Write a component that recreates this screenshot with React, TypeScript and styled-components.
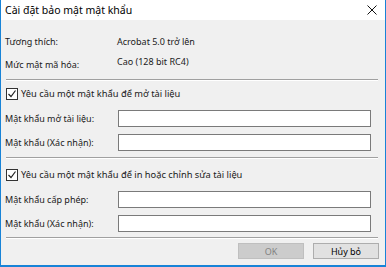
import React from "react";
import styled, { createGlobalStyle } from "styled-components";

const Global = createGlobalStyle`
  html, body { margin: 0; padding: 0; background: #f0f0f0; }
  body { font-family: "Noto Sans", "Open Sans", sans-serif; }
  * { box-sizing: border-box; }
`;

const Window = styled.div`
  width: 386px;
  height: 267px;
  display: flex;
  flex-direction: column;
  background: #f0f0f0;
  border: 1px solid #1883d7;
  border-top: none;
  border-bottom-width: 2px;
`;

const TitleBar = styled.div`
  height: 20px;
  background: #ffffff;
  display: flex;
  align-items: center;
  justify-content: space-between;
  padding: 0 8px 0 4px;
  font-size: 10.5px;
  color: #000;
`;

const Body = styled.div`
  flex: 1;
  display: flex;
  flex-direction: column;
  padding: 0 6px 0 4px;
  font-size: 9px;
  color: #1a1a1a;
`;

const InfoRow = styled.div<{ $top: number }>`
  display: grid;
  grid-template-columns: 112px 1fr;
  margin-top: ${(p) => p.$top}px;
  height: 14px;
  align-items: center;
`;

const InfoValue = styled.span<{ $shift?: number }>`
  position: relative;
  top: ${(p) => p.$shift ?? 0}px;
`;

const Separator = styled.div<{ $top: number }>`
  margin-top: ${(p) => p.$top}px;
  height: 2px;
  border-top: 1px solid #a0a0a0;
  border-bottom: 1px solid #ffffff;
  margin-left: 1px;
  margin-right: 1px;
`;

const CheckRow = styled.label<{ $top: number }>`
  display: flex;
  align-items: center;
  gap: 3px;
  margin-top: ${(p) => p.$top}px;
  height: 13px;
  font-size: 9.3px;
`;

const Box = styled.span`
  width: 12px;
  height: 12px;
  border: 1px solid #333;
  background: #fff;
  display: inline-flex;
  align-items: center;
  justify-content: center;
  margin-left: 1px;
`;

const FieldRow = styled.div<{ $top: number }>`
  display: grid;
  grid-template-columns: 113px 253px;
  align-items: center;
  margin-top: ${(p) => p.$top}px;
`;

const Input = styled.div`
  height: 17px;
  background: #fff;
  border: 1px solid #7a7a7a;
`;

const ButtonBar = styled.div`
  display: flex;
  justify-content: flex-end;
  gap: 9px;
  margin-top: 4px;
  padding-right: 0;
`;

const Button = styled.div<{ $disabled?: boolean }>`
  width: 66px;
  height: 16px;
  display: flex;
  align-items: center;
  justify-content: center;
  font-size: 9px;
  background: ${(p) => (p.$disabled ? "#cccccc" : "#e1e1e1")};
  border: 1px solid ${(p) => (p.$disabled ? "#bfbfbf" : "#adadad")};
  color: ${(p) => (p.$disabled ? "#838383" : "#000")};
`;

const Check = () => (
  <svg width="10" height="10" viewBox="0 0 10 10">
    <path d="M1.5 5 L4 7.5 L8.5 1.5" fill="none" stroke="#222" strokeWidth="1.2" />
  </svg>
);

const Close = () => (
  <svg width="10" height="10" viewBox="0 0 10 10">
    <path d="M0.5 0.5 L9.5 9.5 M9.5 0.5 L0.5 9.5" stroke="#111" strokeWidth="1" />
  </svg>
);

export default function App() {
  return (
    <>
      <Global />
      <Window>
        <TitleBar>
          <span>Cài đặt bảo mật mật khẩu</span>
          <Close />
        </TitleBar>
        <Body>
          <InfoRow $top={14}>
            <span>Tương thích:</span>
            <InfoValue>Acrobat 5.0 trở lên</InfoValue>
          </InfoRow>
          <InfoRow $top={9}>
            <span>Mức mật mã hóa:</span>
            <InfoValue $shift={-3}>Cao (128 bit RC4)</InfoValue>
          </InfoRow>
          <Separator $top={8} />
          <CheckRow $top={6}>
            <Box>
              <Check />
            </Box>
            Yêu cầu một mật khẩu để mở tài liệu
          </CheckRow>
          <FieldRow $top={10}>
            <span>Mật khẩu mở tài liệu:</span>
            <Input />
          </FieldRow>
          <FieldRow $top={7}>
            <span>Mật khẩu (Xác nhận):</span>
            <Input />
          </FieldRow>
          <Separator $top={6} />
          <CheckRow $top={9}>
            <Box>
              <Check />
            </Box>
            Yêu cầu một mật khẩu để in hoặc chỉnh sửa tài liệu
          </CheckRow>
          <FieldRow $top={10}>
            <span>Mật khẩu cấp phép:</span>
            <Input />
          </FieldRow>
          <FieldRow $top={7}>
            <span>Mật khẩu (Xác nhận):</span>
            <Input />
          </FieldRow>
          <Separator $top={5} />
          <ButtonBar>
            <Button $disabled>OK</Button>
            <Button>Hủy bỏ</Button>
          </ButtonBar>
        </Body>
      </Window>
    </>
  );
}
